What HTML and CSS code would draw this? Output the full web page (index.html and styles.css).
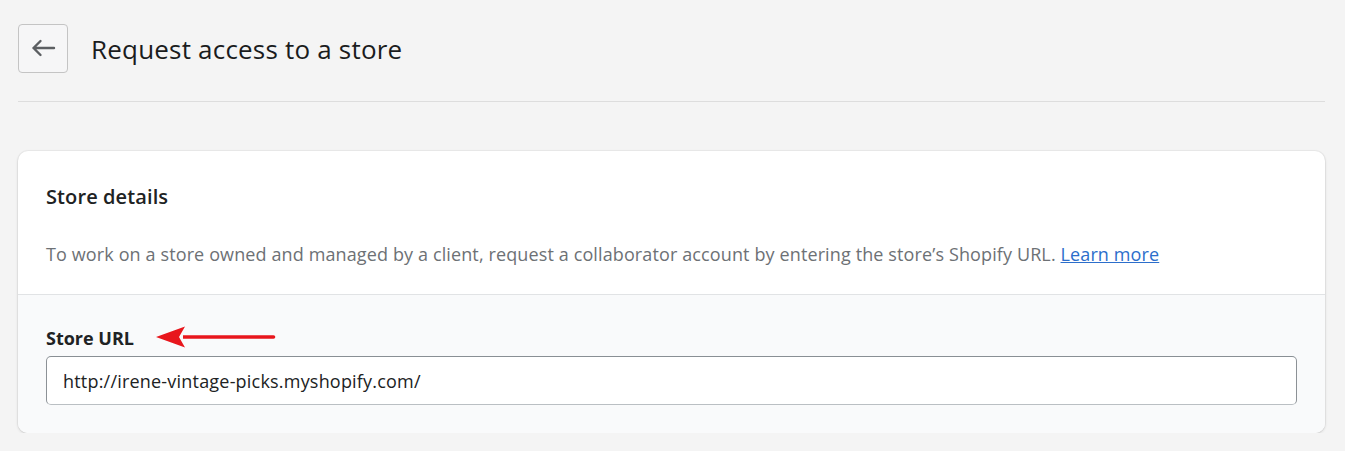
FILE: index.html
```html
<!DOCTYPE html>
<html>
<head>
<meta charset="utf-8">
<link rel="stylesheet" href="styles.css">
</head>
<body>
<div class="page">
  <header class="header">
    <button class="back" aria-label="Back">
      <svg width="26" height="20" viewBox="0 0 26 20"><path d="M24 10H3.5M10.5 3L3.5 10l7 7" fill="none" stroke="#5c5f62" stroke-width="2.4" stroke-linecap="round" stroke-linejoin="round"/></svg>
    </button>
    <h1 class="title">Request access to a store</h1>
  </header>
  <section class="card">
    <div class="card-top">
      <h2 class="card-title">Store details</h2>
      <p class="desc">To work on a store owned and managed by a client, request a collaborator account by entering the store’s Shopify URL. <a href="#" class="link">Learn more</a></p>
    </div>
    <div class="card-bottom">
      <div class="label-row">
        <label class="label">Store URL</label>
        <svg class="arrow" width="122" height="24" viewBox="0 0 122 24"><path d="M28 10.2H118.5a1.8 1.8 0 0 1 0 3.6H28z" fill="#e8161c"/><path d="M1 12L30 1.5 24 12 30 22.5z" fill="#e8161c"/></svg>
      </div>
      <div class="input">http://irene-vintage-picks.myshopify.com/</div>
    </div>
  </section>
</div>
</body>
</html>
```
FILE: styles.css
```css
* { box-sizing: border-box; }
html, body { margin: 0; padding: 0; }
body {
  background: #f4f4f4;
  font-family: "Open Sans", "Noto Sans", sans-serif;
  color: #202223;
}
.page { padding: 24px 20px 0 18px; }
.header {
  display: flex;
  align-items: center;
  gap: 23px;
  height: 78px;
  padding-bottom: 29px;
  border-bottom: 1px solid #dddddd;
}
.back {
  width: 50px;
  height: 49px;
  border: 1px solid #c4c4c4;
  border-radius: 4px;
  background: #f6f6f7;
  display: flex;
  align-items: center;
  justify-content: center;
  padding: 0;
  margin: 0;
}
.title {
  margin: 2px 0 0 0;
  font-size: 26px;
  font-weight: 500;
  letter-spacing: 0.2px;
  color: #1a1c1d;
}
.card {
  margin-top: 49px;
  background: #fff;
  border-radius: 10px;
  box-shadow: 0 0 0 1px rgba(0,0,0,0.03), 0 1px 3px rgba(0,0,0,0.15);
  overflow: hidden;
}
.card-top {
  padding: 32px 28px 0 28px;
  height: 144px;
  border-bottom: 1px solid #e1e3e5;
}
.card-title {
  margin: 0;
  font-size: 20px;
  font-weight: 600;
  line-height: 28px;
  letter-spacing: 0.1px;
}
.desc {
  margin: 30px 0 0 0;
  font-size: 18px;
  line-height: 26px;
  color: #6d7175;
  letter-spacing: 0.12px;
}
.link { color: #2c6ecb; text-decoration: underline; }
.card-bottom {
  background: #f9fafb;
  padding: 31px 28px 28px 28px;
}
.label-row {
  display: flex;
  align-items: center;
  height: 24px;
  gap: 21px;
}
.label {
  font-size: 18px;
  font-weight: 700;
}
.arrow { display: block; margin-top: -2px; }
.input {
  margin-top: 6px;
  height: 49px;
  border: 1px solid #8c9196;
  border-top-color: #898f94;
  border-bottom-color: #babfc3;
  border-radius: 5px;
  background: #fff;
  padding: 0 16px;
  display: flex;
  align-items: center;
  font-size: 18px;
  letter-spacing: 0.2px;
  color: #202223;
}
```
